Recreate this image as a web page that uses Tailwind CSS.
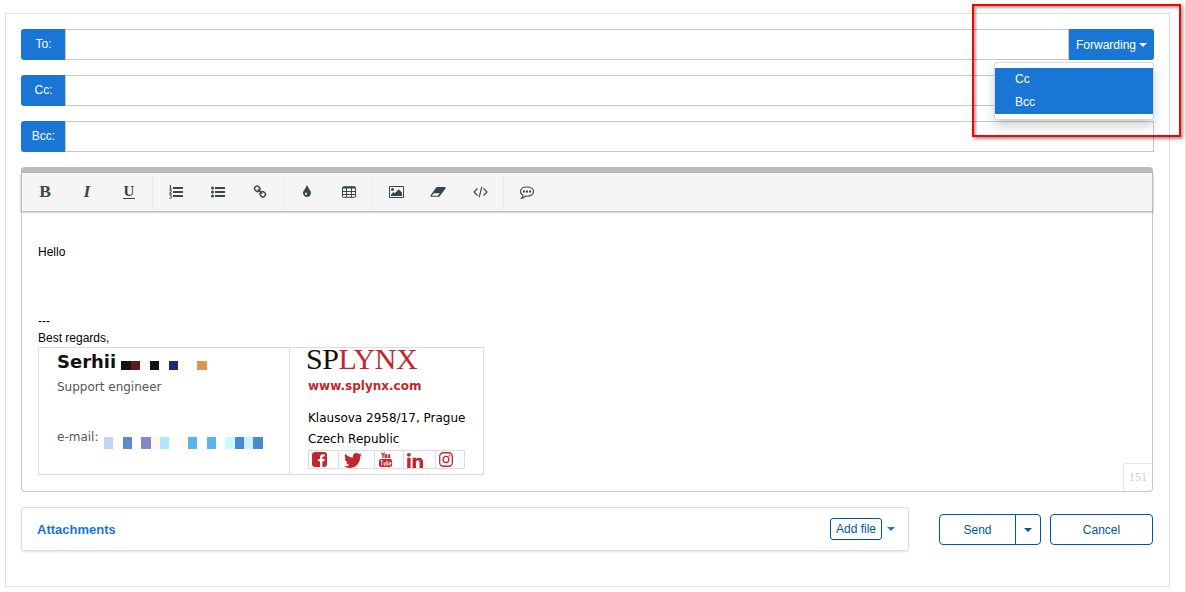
<!DOCTYPE html>
<html lang="en">
<head>
<meta charset="utf-8">
<title>Compose message</title>
<script src="https://cdn.jsdelivr.net/npm/@tailwindcss/browser@4"></script>
</head>
<body class="relative h-[592px] w-[1186px] overflow-hidden bg-white pl-[5px] pt-[13px] font-['Liberation_Sans',sans-serif] text-[12px] text-black">
<div class="absolute right-0 top-0 h-full w-px bg-[#dedede]"></div>
<main class="h-[574px] w-[1165px] border border-[#dedede] px-[15px] pt-[15px]">
  <section class="flex w-[1133px] flex-col gap-[15px] text-white">
    <div class="flex h-[31px]">
      <div class="flex w-11 items-center justify-center rounded-l-[3px] bg-[#1976d5] pb-[2px] pl-px">To:</div>
      <div class="flex-1 border border-[#c8c8c8]"></div>
      <div class="relative flex w-[85px] items-center justify-center gap-[3px] rounded-r-[3px] bg-[#1976d5]">Forwarding
        <svg class="mt-px h-1 w-2" viewBox="0 0 8 4" fill="#fff"><path d="M0 0h8L4 4z"/></svg>
        <div class="absolute right-0 top-[33px] z-10 h-[58px] w-[160px] rounded-[3px] border border-[#d8d8d8] bg-white py-[5px] shadow-[0_6px_12px_rgba(0,0,0,0.18)]">
          <div class="flex h-[23px] items-center bg-[#1976d5] pb-[2px] pl-5">Cc</div>
          <div class="flex h-[23px] items-center bg-[#1976d5] pb-[2px] pl-5">Bcc</div>
        </div>
      </div>
    </div>
    <div class="flex h-[31px]">
      <div class="flex w-11 items-center justify-center rounded-l-[3px] bg-[#1976d5] pb-[2px] pl-px">Cc:</div>
      <div class="flex-1 border border-[#c8c8c8]"></div>
    </div>
    <div class="flex h-[31px]">
      <div class="flex w-11 items-center justify-center rounded-l-[3px] bg-[#1976d5] pb-[2px] pl-px">Bcc:</div>
      <div class="flex-1 border border-[#c8c8c8]"></div>
    </div>
  </section>

  <section class="relative mt-[15px] h-[325px] w-[1132px] rounded-[4px] border border-t-0 border-[#c8c8c8]">
    <div class="-mx-px h-[6px] rounded-t-[4px] bg-[#bcbcbc]"></div>
    <div class="-mx-px flex h-[38px] items-center border-x border-[#bcbcbc] bg-[#f5f5f5] pl-[2px] font-['Liberation_Serif',serif] text-[#37474f] shadow-[0_1px_2px_rgba(0,0,0,0.4)]">
      <div class="flex w-[42px] justify-center text-[17.500px] font-bold leading-none">B</div>
      <div class="flex w-[42px] justify-center text-[17.500px] font-bold italic leading-none">I</div>
      <div class="flex w-[42px] justify-center text-[15px] font-bold leading-none"><span class="mt-[-1px] border-b border-[#37474f] px-[0.500px] leading-[13px]">U</span></div>
      <div class="mx-[2px] h-[34px] w-px shrink-0 bg-[#e8e8e8]"></div>
      <div class="flex w-[42px] justify-center">
        <svg class="h-[14px] w-[14px]" viewBox="0 0 14 14" fill="#37474f"><path d="M4 2h10v2H4zM4 6h10v2H4zM4 10h10v2H4z"/><path d="M.5 1L1.600.3V4M.3 4h2.500M.4 5.600h1.900v1.200L.5 8.200h2.300M.4 9.800h2.100L1.600 11.200c1.600.1 1.200 2-.1 2H.3" fill="none" stroke="#37474f"/></svg>
      </div>
      <div class="flex w-[42px] justify-center">
        <svg class="h-[14px] w-[14px]" viewBox="0 0 14 14" fill="#37474f"><path d="M4 2h10v2H4zM4 6h10v2H4zM4 10h10v2H4z"/><circle cx="1.500" cy="3" r="1.500"/><circle cx="1.500" cy="7" r="1.500"/><circle cx="1.500" cy="11" r="1.500"/></svg>
      </div>
      <div class="flex w-[42px] justify-center">
        <svg class="h-[14px] w-[14px]" viewBox="0 0 1792 1792" fill="#37474f"><path d="M1520 1216q0-40-28-68l-208-208q-28-28-68-28-42 0-72 32 3 3 19 18.500t21.500 21.500 15 19 13 25.500 3.500 27.500q0 40-28 68t-68 28q-15 0-27.500-3.500t-25.500-13-19-15-21.500-21.500-18.500-19q-33 31-33 73 0 40 28 68l206 207q27 27 68 27 40 0 68-26l147-146q28-28 28-67zm-703-705q0-40-28-68l-206-207q-28-28-68-28-39 0-68 27l-147 146q-28 28-28 67 0 40 28 68l208 208q27 27 68 27 42 0 72-31-3-3-19-18.500t-21.500-21.500-15-19-13-25.500-3.500-27.500q0-40 28-68t68-28q15 0 27.500 3.500t25.500 13 19 15 21.500 21.500 18.500 19q33-31 33-73zm895 705q0 120-85 203l-147 146q-83 83-203 83-121 0-204-85l-206-207q-83-83-83-203 0-123 88-209l-88-88q-86 88-208 88-120 0-204-84l-208-208q-84-84-84-204t85-203l147-146q83-83 203-83 121 0 204 85l206 207q83 83 83 203 0 123-88 209l88 88q86-88 208-88 120 0 204 84l208 208q84 84 84 204z"/></svg>
      </div>
      <div class="mx-[2px] h-[34px] w-px shrink-0 bg-[#e8e8e8]"></div>
      <div class="flex w-[42px] justify-center">
        <svg class="mt-[-1px] h-[14px] w-[14px]" viewBox="0 0 1792 1792" fill="#37474f"><path d="M896 1152q0-36-20-69-1-1-15.500-22.500t-25.500-38-25-44-21-50.500q-4-16-21-16t-21 16q-7 23-21 50.500t-25 44-25.500 38-15.500 22.500q-20 33-20 69 0 53 37.500 90.500t90.500 37.500 90.500-37.500 37.500-90.500zm512-128q0 212-150 362t-362 150-362-150-150-362q0-145 81-275 6-9 62.500-90.500t101-151 99.500-178 83-201.500q9-30 34-47t51-17 51.500 17 33.500 47q28 93 83 201.500t99.500 178 101 151 62.500 90.500q81 127 81 275z"/></svg>
      </div>
      <div class="flex w-[42px] justify-center">
        <svg class="mt-[-1px] h-[12px] w-[14px]" viewBox="0 0 14 12"><rect x=".5" y=".7" width="13" height="10.600" rx="1" fill="none" stroke="#37474f"/><path d="M.5 1h13v1.500H.5z" fill="#37474f"/><path d="M1 5.500h12M1 8.500h12M4.500 2v9M9.500 2v9" stroke="#37474f" fill="none"/></svg>
      </div>
      <div class="mx-[2px] h-[34px] w-px shrink-0 bg-[#e8e8e8]"></div>
      <div class="flex w-[42px] justify-center">
        <svg class="h-[14px] w-[15px]" viewBox="-64 0 1920 1792" fill="#37474f"><path d="M576 576q0 80-56 136t-136 56-136-56-56-136 56-136 136-56 136 56 56 136zm1024 384v448h-1408v-192l320-320 160 160 512-512zm96-704h-1600q-13 0-22.500 9.500t-9.500 22.500v1216q0 13 9.500 22.500t22.500 9.500h1600q13 0 22.500-9.500t9.500-22.500v-1216q0-13-9.500-22.500t-22.500-9.500zm160 32v1216q0 66-47 113t-113 47h-1600q-66 0-113-47t-47-113v-1216q0-66 47-113t113-47h1600q66 0 113 47t47 113z"/></svg>
      </div>
      <div class="flex w-[42px] justify-center">
        <svg class="h-[12px] w-[16px]" viewBox="0 0 16 12" fill="#37474f"><path fill-rule="evenodd" d="M7.100 1h7.700c.8 0 1.200.8.7 1.400L9.900 10c-.3.500-.6.700-1.100.7H1.300c-.8 0-1.200-.8-.7-1.400L6 1.700C6.300 1.200 6.600 1 7.100 1zM7.800 9.800l1.900-2.500H3.700L1.900 9.800z"/></svg>
      </div>
      <div class="flex w-[42px] justify-center">
        <svg class="h-[12px] w-[15px]" viewBox="0 0 15 12" fill="none" stroke="#37474f" stroke-width="1.200"><path d="M4.500 2.500L1 6l3.500 3.500M10.500 2.500L14 6l-3.500 3.500M8.800.8L6.200 11.200"/></svg>
      </div>
      <div class="mx-[2px] h-[34px] w-px shrink-0 bg-[#e8e8e8]"></div>
      <div class="flex w-[42px] justify-center">
        <svg class="mt-px h-[13px] w-[14px]" viewBox="0 0 14 13"><path d="M7 1c3.600 0 6.500 1.900 6.500 4.600S10.600 10.200 7 10.200c-.5 0-1 0-1.500-.1-1 1-2.200 1.700-3.800 2 .7-.7 1-1.600 1.200-2.800C1.400 8.500.5 7.200.5 5.600.5 2.900 3.400 1 7 1z" fill="none" stroke="#37474f" stroke-width="1.150"/><path d="M3 4.600h2v2H3zM6 4.600h2v2H6zM9 4.600h2v2H9z" fill="#37474f"/></svg>
      </div>
    </div>

    <div class="pl-4 pt-[33px] leading-4">
      <p>Hello</p>
      <p class="mt-[53px]">---</p>
      <p class="mt-px">Best regards,</p>
      <div class="mt-px flex h-[128px] w-[446px] border border-[#dcdcdc] font-['DejaVu_Sans',sans-serif] text-[12px] text-[#555]">
        <div class="w-[251px] border-r border-[#dcdcdc] pl-[18px]">
          <div class="mt-[3px] flex h-[22px] items-start gap-[5px]">
            <span class="text-[18px] font-bold leading-[22px] text-[#111]">Serhii</span>
            <div class="mt-[10px] flex h-[9px]"><i class="w-[10px] bg-[#151313]"></i><i class="w-[9px] bg-[#611b16]"></i><i class="w-[10px] bg-[#fff9f9]"></i><i class="w-[9px] bg-[#151313]"></i><i class="w-[10px]"></i><i class="w-[9px] bg-[#172d78]"></i><i class="w-[19px]"></i><i class="w-[10px] bg-[#df964d]"></i></div>
          </div>
          <p class="mt-[6px]">Support engineer</p>
          <div class="mt-[34px] flex items-start">
            <span class="w-[47px]">e-mail:</span>
            <div class="mt-2 flex h-3"><i class="w-[9px] bg-[#bfd5f1]"></i><i class="w-[10px] bg-[#fbfeff]"></i><i class="w-[9px] bg-[#5b8ad5]"></i><i class="w-[9px]"></i><i class="w-[10px] bg-[#8588c7]"></i><i class="w-[9px] bg-[#fdf7f2]"></i><i class="w-[9px] bg-[#b0e6f9]"></i><i class="w-[10px]"></i><i class="w-[9px] bg-[#fefaf0]"></i><i class="w-[9px] bg-[#5cb2ed]"></i><i class="w-[10px] bg-[#fafeff]"></i><i class="w-[9px] bg-[#5cb2ed]"></i><i class="w-[9px]"></i><i class="w-[10px] bg-[#c9fbff]"></i><i class="w-[9px] bg-[#488bd5]"></i><i class="w-[9px] bg-[#ccf1fc]"></i><i class="w-[10px] bg-[#4a88cf]"></i></div>
          </div>
        </div>
        <div class="pl-[18px] text-black">
          <div class="ml-[-2px] h-[22px] font-['Liberation_Serif',serif] text-[30px] leading-[21px] tracking-[-0.400px] text-[#111]">SP<span class="text-[#c1272d]">LYNX</span></div>
          <p class="mt-2 font-bold text-[#c1272d]">www.splynx.com</p>
          <p class="mt-4">Klausova 2958/17, Prague</p>
          <p class="mt-[5px]">Czech Republic</p>
          <div class="mt-[3px] flex h-[19px] w-[157px] border border-[#dcdcdc]">
            <div class="w-[30px] border-r border-[#dcdcdc] pl-[3px] pt-px"><svg class="h-[15px] w-[15px]" viewBox="128 128 1536 1536" fill="#c1272d"><path d="M1376 128q119 0 203.500 84.500t84.500 203.500v960q0 119-84.500 203.500t-203.500 84.500h-188v-595h199l30-232h-229v-148q0-56 23.500-84t91.500-28l122-1v-207q-63-9-178-9-136 0-217.500 80t-81.500 226v171h-200v232h200v595h-532q-119 0-203.500-84.500t-84.500-203.500v-960q0-119 84.500-203.500t203.500-84.500h960z"/></svg></div>
            <div class="w-9 border-r border-[#dcdcdc] pl-[5px] pt-[2px]"><svg class="h-[15px] w-[18px]" preserveAspectRatio="none" viewBox="108 256 1576 1280" fill="#c1272d"><path d="M1684 408q-67 98-162 167 1 14 1 42 0 130-38 259.500t-115.500 248.500-184.500 210.500-258 146-323 54.500q-271 0-496-145 35 4 78 4 225 0 401-138-105-2-188-64.500t-114-159.500q33 5 61 5 43 0 85-11-112-23-185.500-111.500t-73.500-205.500v-4q68 38 146 41-66-44-105-115t-39-154q0-88 44-163 121 149 294.500 238.500t371.500 99.500q-8-38-8-74 0-134 94.500-228.500t228.500-94.500q140 0 236 102 109-21 205-78-37 115-142 178 93-10 186-50z"/></svg></div>
            <div class="w-[29px] border-r border-[#dcdcdc] pl-1 pt-px"><svg class="h-[15px] w-[13px]" preserveAspectRatio="none" viewBox="0 0 13 16" fill="none" stroke="#c1272d" stroke-width="1.200"><path d="M2.500.5L4 3.800 5.500.5M4 3.500v3"/><rect x="6" y="2.600" width="1.400" height="3.300" rx=".7"/><path d="M9.200 2.300v3.500h1.400V2.300"/><rect x="0" y="7.500" width="13" height="8.500" rx="1.800" fill="#c1272d" stroke="none"/><path d="M1.300 9.300h2.600M2.600 9.300v5.200M5 10.800v3.300h1.300v-3.300M7.900 9v5.100h1.200v-3H8M12 14h-1.300v-3H12v1.500h-1" stroke="#fff" stroke-width=".8"/></svg></div>
            <div class="w-8 border-r border-[#dcdcdc] pl-[3px] pt-[2px]"><svg class="h-[15px] w-4" preserveAspectRatio="none" viewBox="128 148 1536 1468" fill="#c1272d"><path d="M477 625v991h-330v-991h330zm21-306q1 73-50.500 122t-135.500 49h-2q-82 0-132-49t-50-122q0-74 51.500-122.500t134.500-48.500 133 48.500 51 122.500zm1166 729v568h-329v-530q0-105-40.500-164.500t-126.500-59.500q-63 0-105.500 34.500t-63.500 85.500q-11 30-11 81v553h-329q2-399 2-647t-1-296l-1-48h329v144h-2q20-32 41-56t56.500-52 87-43.500 114.500-15.500q171 0 275 113.500t104 332.500z"/></svg></div>
            <div class="pl-[3px] pt-px"><svg class="h-[15px] w-[14px]" preserveAspectRatio="none" viewBox="0 0 14 14" fill="none" stroke="#c1272d" stroke-width="1.300"><rect x=".7" y=".7" width="12.600" height="12.600" rx="3.500"/><circle cx="7" cy="7" r="2.900"/><circle cx="10.600" cy="3.400" r=".8" fill="#c1272d" stroke="none"/></svg></div>
          </div>
        </div>
      </div>
    </div>
    <div class="absolute bottom-0 right-0 flex h-[28px] w-[29px] items-center justify-center rounded-tl-[2px] border-l border-t border-[#e6e6e6] pb-px font-['Liberation_Serif',serif] text-[12px] text-[#ccc]">151</div>
  </section>

  <section class="mt-[15px] flex w-[1132px] items-start text-[#01579b]">
    <div class="flex h-11 w-[888px] items-center rounded-[3px] border border-[#dedede] pl-[15px] pr-[13px] shadow-[0_1px_2px_rgba(0,0,0,0.12)]">
      <span class="flex-1 pt-[2px] text-[13px] font-bold text-[#1976d5]">Attachments</span>
      <div class="mt-[-1px] flex h-[22px] w-[52px] items-center justify-center whitespace-nowrap rounded-[3px] border border-[#01579b]">Add file</div>
      <svg class="ml-[5px] h-1 w-2" viewBox="0 0 8 4" fill="#1976d5"><path d="M0 0h8L4 4z"/></svg>
    </div>
    <div class="ml-[30px] mt-[7px] flex h-[31px] w-[102px] rounded-[4px] border border-[#01579b]">
      <div class="flex w-[76px] items-center justify-center border-r border-[#01579b]">Send</div>
      <div class="flex flex-1 items-center justify-center"><svg class="h-1 w-2" viewBox="0 0 8 4" fill="#01579b"><path d="M0 0h8L4 4z"/></svg></div>
    </div>
    <div class="ml-[9px] mt-[7px] flex h-[31px] w-[103px] items-center justify-center rounded-[4px] border border-[#01579b]">Cancel</div>
  </section>
</main>
<div class="pointer-events-none absolute left-[972px] top-1 z-20 h-[133px] w-[209px] border-2 border-[#ff0000] shadow-[2px_2px_3px_rgba(0,0,0,0.4),inset_2px_2px_3px_rgba(0,0,0,0.35)]"></div>
</body>
</html>
